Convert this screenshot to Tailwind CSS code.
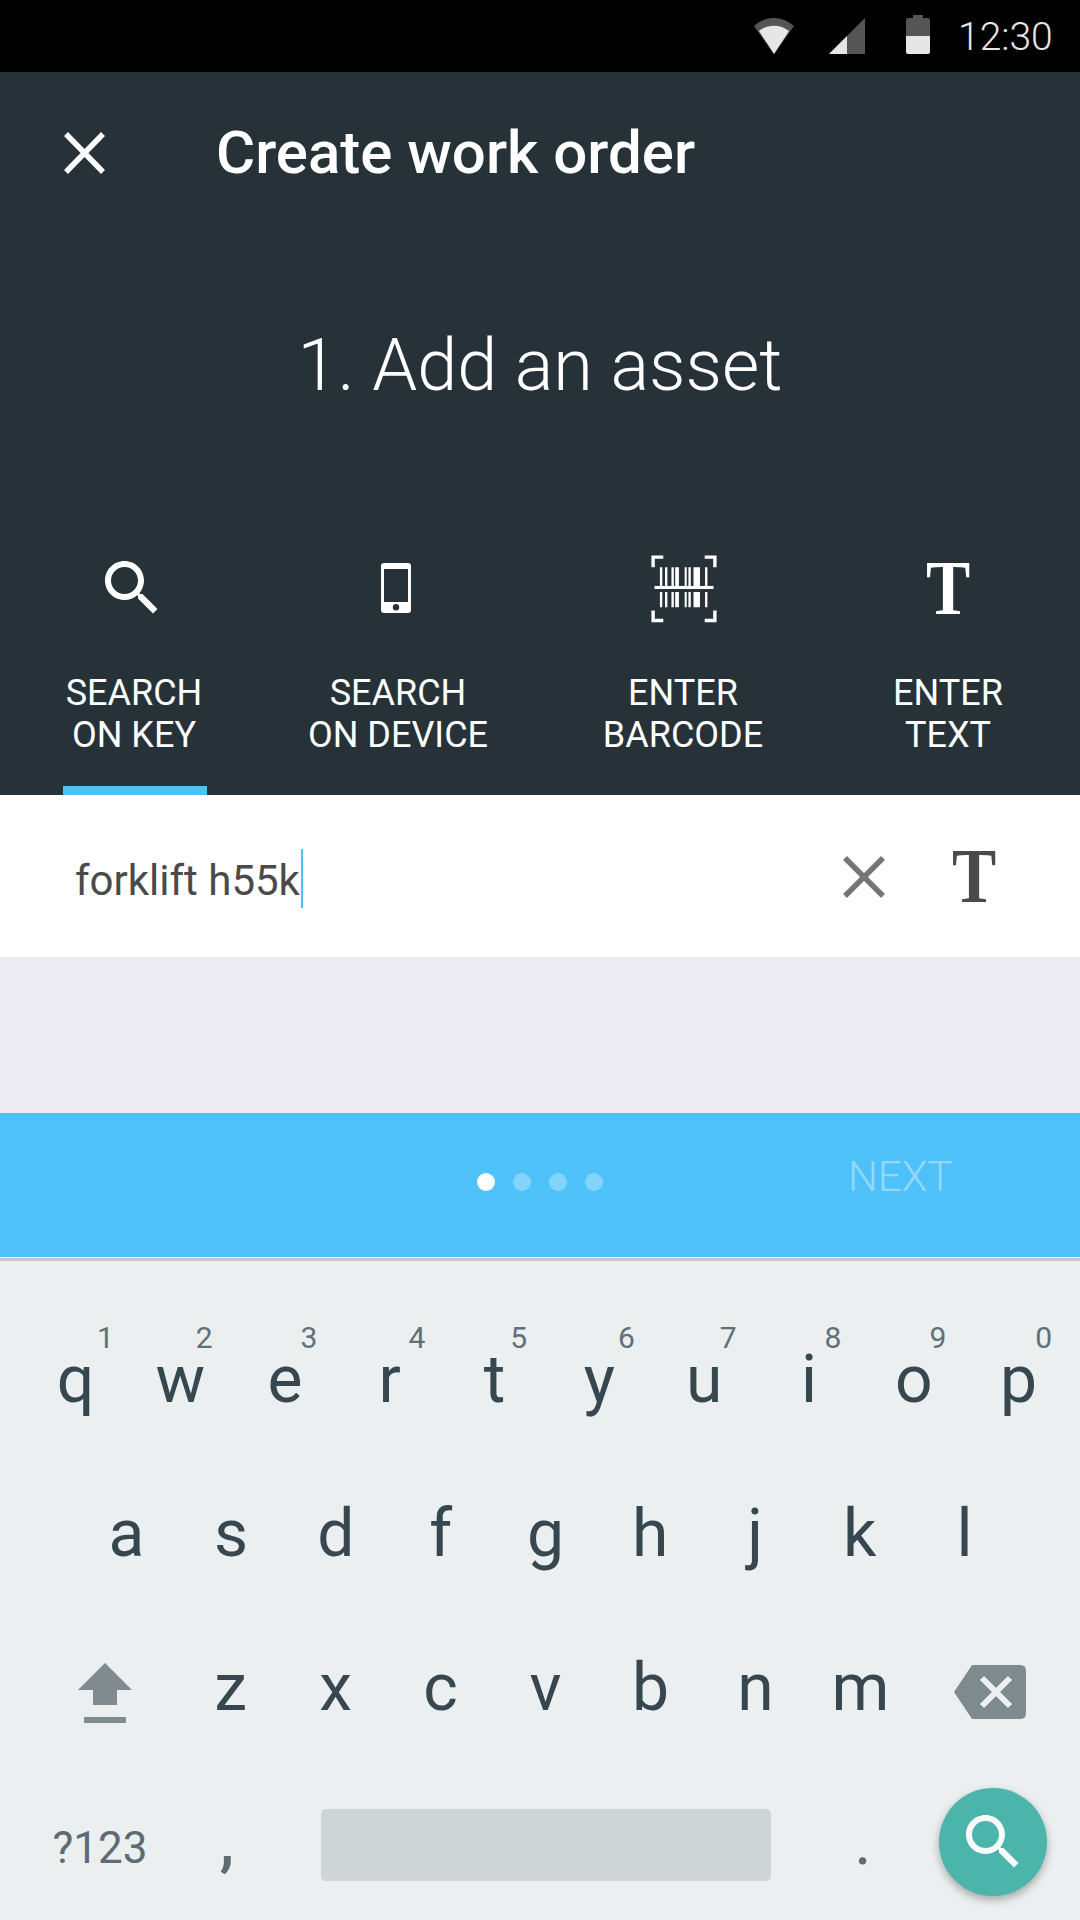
<!DOCTYPE html>
<html lang="en">
<head>
<meta charset="UTF-8" />
<title>Create work order</title>
<script src="https://cdn.jsdelivr.net/npm/@tailwindcss/browser@4"></script>
</head>
<body class="w-[1080px] h-[1920px] overflow-hidden bg-[#ebeff0] font-['Roboto',sans-serif]">
    <!-- status bar -->
    <div class="h-[72px] bg-black flex items-center relative">
        <svg class="absolute left-[754px] top-[18px]" width="40" height="36" viewBox="0 0 40 36">
            <path d="M0 8 C12 -2.7 28 -2.7 40 8 L20 36 Z" fill="#555" />
            <path d="M5 13 C14 6 26 6 35 13 L20 36 Z" fill="#e6e6e6" />
        </svg>
        <svg class="absolute left-[829px] top-[18px]" width="36" height="36" viewBox="0 0 36 36">
            <path d="M0 36 L36 0 V36 Z" fill="#555" />
            <path d="M0 36 L18 18 V36 Z" fill="#e6e6e6" />
        </svg>
        <svg class="absolute left-[906px] top-[15px]" width="24" height="39" viewBox="0 0 24 39">
            <path d="M7 0 H17 V3 H22 Q24 3 24 5 V21 H0 V5 Q0 3 2 3 H7 Z" fill="#555" />
            <path d="M0 21 H24 V37 Q24 39 22 39 H2 Q0 39 0 37 Z" fill="#e6e6e6" />
        </svg>
        <span class="absolute left-[958px] top-[15px] text-[39px] leading-[45px] font-light text-[#e6e6e6]">12:30</span>
    </div>

    <!-- dark header -->
    <div class="bg-[#263238] h-[723px] text-white">
        <div class="h-[162px] flex items-center pl-[64px]">
            <svg width="41" height="42" viewBox="0 0 41 42" fill="none" stroke="#fff" stroke-width="5.5">
                <path d="M2 2 L39 40 M39 2 L2 40" />
            </svg>
            <h1 class="ml-[111px] text-[60px] leading-none font-medium">Create work order</h1>
        </div>
        <div class="h-[262px] pt-[2px] flex items-center justify-center text-[72px] font-light">1. Add an asset</div>
        <div class="grid grid-cols-[268px_260px_310px_220px] h-[299px] text-[36px] leading-[42px] font-normal text-center">
            <div class="relative flex flex-col items-center">
                <svg class="mt-[56px] mr-[5px]" width="72" height="72" viewBox="0 0 24 24" fill="#fff">
                    <path d="M15.5 14h-.79l-.28-.27C15.41 12.59 16 11.11 16 9.5 16 5.91 13.09 3 9.5 3S3 5.91 3 9.5 5.91 16 9.5 16c1.61 0 3.09-.59 4.23-1.57l.27.28v.79l5 4.99L20.49 19l-4.99-5zm-6 0C7.01 14 5 11.99 5 9.5S7.01 5 9.5 5 14 7.01 14 9.5 11.99 14 9.5 14z" />
                </svg>
                <div class="mt-[48px]">SEARCH<br />ON KEY</div>
                <div class="absolute bottom-0 left-[63px] w-[144px] h-[9px] bg-[#4fc1f9]"></div>
            </div>
            <div class="flex flex-col items-center">
                <svg class="mt-[56px] mr-[5px]" width="72" height="72" viewBox="0 0 72 72" fill="#fff">
                    <path fill-rule="evenodd" d="M24 11 H48 Q51 11 51 14 V58 Q51 61 48 61 H24 Q21 61 21 58 V14 Q21 11 24 11 Z M24 17 V50 H48 V17 Z M36 52 A3.2 3.2 0 1 0 36 58.400 A3.2 3.2 0 1 0 36 52 Z" />
                </svg>
                <div class="mt-[48px]">SEARCH<br />ON DEVICE</div>
            </div>
            <div class="flex flex-col items-center">
                <svg class="mt-[55px] mb-[-4px] ml-[2px]" width="76" height="76" viewBox="309 62 218 224" fill="#fff">
                    <path d="M322 110 V75 H357 V85 H332 V110 Z M514 110 V75 H479 V85 H504 V110 Z M322 237 V272 H357 V262 H332 V237 Z M514 237 V272 H479 V262 H504 V237 Z" />
                    <rect x="331" y="165" width="174" height="9" />
                    <path d="M347 110h7v55h-7z M362 110h7v55h-7z M381 110h7v55h-7z M392 110h11v55h-11z M420 110h6v55h-6z M431 110h7v55h-7z M446 110h19v55h-19z M480 110h7v55h-7z" />
                    <path d="M347 183h7v45h-7z M362 183h7v45h-7z M381 183h7v45h-7z M392 183h11v45h-11z M420 183h6v45h-6z M431 183h7v45h-7z M446 183h19v45h-19z M480 183h7v45h-7z" />
                </svg>
                <div class="mt-[49px]">ENTER<br />BARCODE</div>
            </div>
            <div class="flex flex-col items-center">
                <div class="mt-[56px] h-[72px] flex items-center font-['Liberation_Serif',serif] font-bold text-[78px] leading-none scale-x-[0.85]">T</div>
                <div class="mt-[48px]">ENTER<br />TEXT</div>
            </div>
        </div>
    </div>

    <!-- input -->
    <div class="h-[162px] bg-white flex items-center relative">
        <span class="ml-[75px] mt-[9px] text-[42px] leading-none text-[#4a4a4a]">forklift h55k</span>
        <span class="w-[2px] h-[59px] bg-[#4fc1f9] ml-[1px] mt-[4px]"></span>
        <svg class="absolute left-[843px] top-[61px]" width="42" height="42" viewBox="0 0 42 42" fill="none" stroke="#757575" stroke-width="5.5">
            <path d="M2 2 L40 40 M40 2 L2 40" />
        </svg>
        <span class="absolute left-[948px] top-[36px] font-['Liberation_Serif',serif] font-bold text-[78px] leading-[90px] text-[#4a4a4a] scale-x-[0.85]">T</span>
    </div>
    <div class="h-[156px] bg-[#ecebf1]"></div>

    <!-- pager -->
    <div class="h-[144px] bg-[#4fc1f9] relative flex items-center">
        <div class="absolute left-[477px] top-[60px] flex gap-[18px]">
            <span class="w-[18px] h-[18px] rounded-full bg-white"></span>
            <span class="w-[18px] h-[18px] rounded-full bg-white/30"></span>
            <span class="w-[18px] h-[18px] rounded-full bg-white/30"></span>
            <span class="w-[18px] h-[18px] rounded-full bg-white/30"></span>
        </div>
        <span class="absolute left-[848px] top-[40px] text-[42px] leading-[48px] font-light text-white/40">NEXT</span>
    </div>
    <div class="h-[1px] bg-white"></div>
    <div class="h-[3px] bg-[#c6c9cb]"></div>

    <!-- keyboard -->
    <div class="pt-[42px] text-[66px] leading-[154px] text-[#37474f]">
        <div class="grid grid-cols-10 w-[1048px] ml-[23px] text-center">
            <div class="relative">q<span class="absolute left-[74px] top-[19px] text-[30px] leading-[32px] text-[#607078]">1</span></div>
            <div class="relative">w<span class="absolute left-[68px] top-[19px] text-[30px] leading-[32px] text-[#607078]">2</span></div>
            <div class="relative">e<span class="absolute left-[68px] top-[19px] text-[30px] leading-[32px] text-[#607078]">3</span></div>
            <div class="relative">r<span class="absolute left-[71px] top-[19px] text-[30px] leading-[32px] text-[#607078]">4</span></div>
            <div class="relative">t<span class="absolute left-[68px] top-[19px] text-[30px] leading-[32px] text-[#607078]">5</span></div>
            <div class="relative">y<span class="absolute left-[71px] top-[19px] text-[30px] leading-[32px] text-[#607078]">6</span></div>
            <div class="relative">u<span class="absolute left-[68px] top-[19px] text-[30px] leading-[32px] text-[#607078]">7</span></div>
            <div class="relative">i<span class="absolute left-[68px] top-[19px] text-[30px] leading-[32px] text-[#607078]">8</span></div>
            <div class="relative">o<span class="absolute left-[68px] top-[19px] text-[30px] leading-[32px] text-[#607078]">9</span></div>
            <div class="relative">p<span class="absolute left-[69px] top-[19px] text-[30px] leading-[32px] text-[#607078]">0</span></div>
        </div>
        <div class="grid grid-cols-9 w-[943px] ml-[74px] text-center">
            <div>a</div><div>s</div><div>d</div><div>f</div><div>g</div><div>h</div><div>j</div><div>k</div><div>l</div>
        </div>
        <div class="flex text-center ml-[22px]">
            <div class="w-[156px] flex items-center justify-center h-[154px] pl-[10px] pt-[10px]">
                <svg width="54" height="60" viewBox="0 0 54 60" fill="#808b90">
                    <path d="M27 0 L54 27 H39 V42 H15 V27 H0 Z" />
                    <rect x="6" y="54" width="42" height="6" />
                </svg>
            </div>
            <div class="w-[105px]">z</div><div class="w-[105px]">x</div><div class="w-[105px]">c</div><div class="w-[105px]">v</div><div class="w-[105px]">b</div><div class="w-[105px]">n</div><div class="w-[105px]">m</div>
            <div class="w-[156px] flex items-center justify-center h-[154px] pr-[2px] pt-[7px]">
                <svg width="72" height="54" viewBox="0 0 72 54" fill="#7f8a8f">
                    <path d="M18 0 H66 Q72 0 72 6 V48 Q72 54 66 54 H18 L0 27 Z" />
                    <path d="M28 13 L56 41 M56 13 L28 41" stroke="#ebeff0" stroke-width="6" fill="none" />
                </svg>
            </div>
        </div>
        <div class="flex items-center h-[154px] text-[#5f6b73]">
            <div class="w-[200px] text-center text-[44px] mt-[12px]">?123</div>
            <div class="w-[54px] text-center font-medium">,</div>
            <div class="ml-[67px] w-[450px] h-[72px] mt-[6px] rounded-[5px] bg-[#cfd4d7]"></div>
            <div class="ml-[24px] w-[136px] text-center">.</div>
            <div class="ml-[8px] w-[108px] h-[108px] rounded-full bg-[#4cb5ab] shadow-[0_4px_8px_rgba(0,0,0,0.3)] flex items-center justify-center">
                <svg width="72" height="72" viewBox="0 0 24 24" fill="#fafafa">
                    <path d="M15.5 14h-.79l-.28-.27C15.41 12.59 16 11.11 16 9.5 16 5.91 13.09 3 9.5 3S3 5.91 3 9.5 5.91 16 9.5 16c1.61 0 3.09-.59 4.23-1.57l.27.28v.79l5 4.99L20.49 19l-4.99-5zm-6 0C7.01 14 5 11.99 5 9.5S7.01 5 9.5 5 14 7.01 14 9.5 11.99 14 9.5 14z" />
                </svg>
            </div>
        </div>
    </div>
</body>
</html>
